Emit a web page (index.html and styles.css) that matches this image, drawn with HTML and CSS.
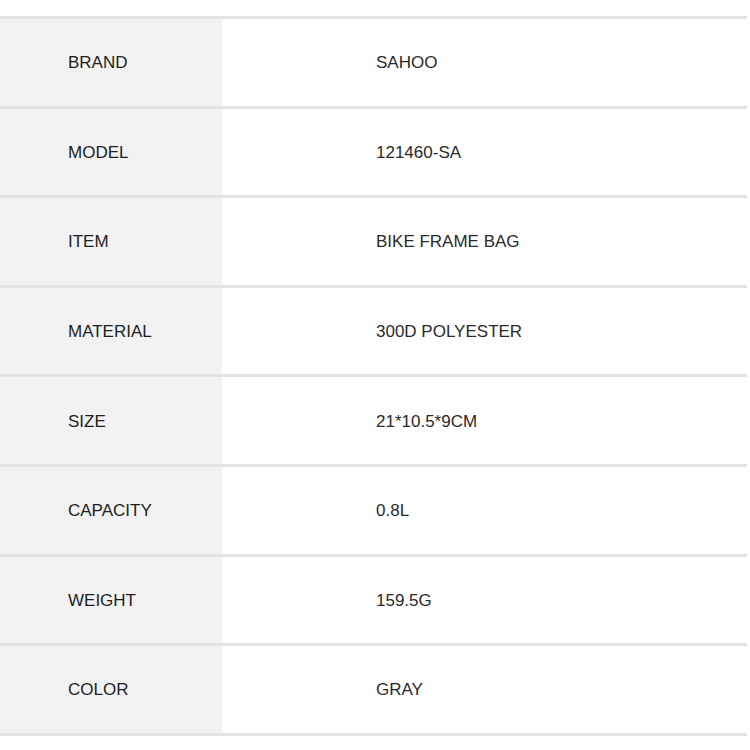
FILE: index.html
```html
<!DOCTYPE html>
<html>
<head>
<meta charset="utf-8">
<link rel="stylesheet" href="styles.css">
</head>
<body>
<div class="spec">
  <div class="row"><div class="label">BRAND</div><div class="value">SAHOO</div></div>
  <div class="row"><div class="label">MODEL</div><div class="value">121460-SA</div></div>
  <div class="row"><div class="label">ITEM</div><div class="value">BIKE FRAME BAG</div></div>
  <div class="row"><div class="label">MATERIAL</div><div class="value">300D POLYESTER</div></div>
  <div class="row"><div class="label">SIZE</div><div class="value">21*10.5*9CM</div></div>
  <div class="row"><div class="label">CAPACITY</div><div class="value">0.8L</div></div>
  <div class="row"><div class="label">WEIGHT</div><div class="value">159.5G</div></div>
  <div class="row"><div class="label">COLOR</div><div class="value">GRAY</div></div>
</div>
</body>
</html>
```
FILE: styles.css
```css
html, body {
  margin: 0;
  padding: 0;
  background: #ffffff;
}
body {
  font-family: "Liberation Sans", Arial, sans-serif;
  font-size: 17px;
}
.spec {
  margin-top: 16px;
  width: 747px;
  border-bottom: 3px solid #e3e3e3;
}
.row {
  display: grid;
  grid-template-columns: 222px 1fr;
  height: 89.6px;
  box-sizing: border-box;
  border-top: 3px solid #e3e3e3;
}
.label {
  background: #f2f2f2;
  color: #1e1e1e;
  padding-left: 68px;
  padding-top: 2px;
  display: flex;
  align-items: center;
}
.value {
  color: #2a2a2a;
  padding-left: 154px;
  padding-top: 2px;
  display: flex;
  align-items: center;
}
```
